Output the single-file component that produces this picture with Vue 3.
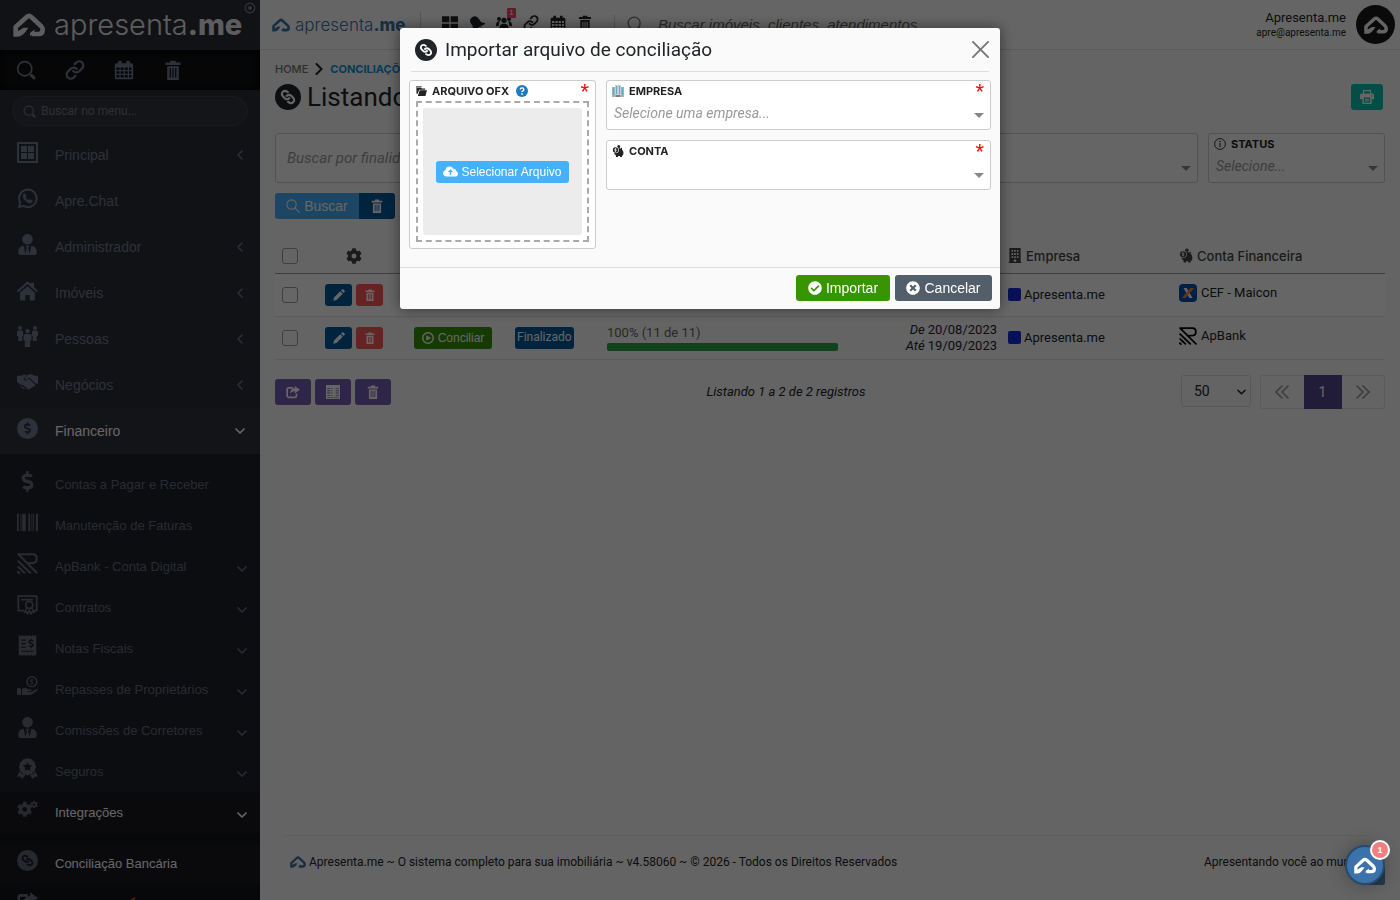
<script setup>
import { h, ref } from 'vue'

const LINK = 'M326.612 185.391c59.747 59.809 58.927 155.698.36 214.59-.11.12-.24.25-.36.37l-67.2 67.2c-59.27 59.27-155.699 59.262-214.96 0-59.27-59.26-59.27-155.7 0-214.96l37.106-37.106c9.84-9.84 26.786-3.3 27.294 10.606.648 17.722 3.826 35.527 9.69 52.721 1.986 5.822.567 12.262-3.783 16.612l-13.087 13.087c-28.026 28.026-28.905 73.66-1.155 101.96 28.024 28.579 74.086 28.749 102.325.51l67.2-67.19c28.191-28.191 28.073-73.757 0-101.83-3.701-3.694-7.429-6.564-10.341-8.569a16.037 16.037 0 0 1-6.947-12.606c-.396-10.567 3.348-21.456 11.698-29.806l21.054-21.055c5.521-5.521 14.182-6.199 20.584-1.731a152.482 152.482 0 0 1 20.522 17.197zM467.547 44.449c-59.261-59.262-155.69-59.27-214.96 0l-67.2 67.2c-.12.12-.25.25-.36.37-58.566 58.892-59.387 154.781.36 214.59a152.454 152.454 0 0 0 20.521 17.196c6.402 4.468 15.064 3.789 20.584-1.731l21.054-21.055c8.35-8.35 12.094-19.239 11.698-29.806a16.037 16.037 0 0 0-6.947-12.606c-2.912-2.005-6.64-4.875-10.341-8.569-28.073-28.073-28.191-73.639 0-101.83l67.2-67.19c28.239-28.239 74.3-28.069 102.325.51 27.75 28.3 26.872 73.934-1.155 101.96l-13.087 13.087c-4.35 4.35-5.769 10.79-3.783 16.612 5.864 17.194 9.042 34.999 9.69 52.721.509 13.906 17.454 20.446 27.294 10.606l37.106-37.106c59.271-59.259 59.271-155.699.001-214.959z'
const DOLLAR = 'M209.2 233.4l-108-31.6C88.7 198.2 80 186.5 80 173.5c0-16.3 13.2-29.5 29.5-29.5h66.3c12.2 0 24.2 3.7 34.2 10.5 6.1 4.1 14.3 3.1 19.5-2l34.8-34c7.1-6.9 6.1-18.4-1.8-24.5C238 74.8 207.4 64.1 176 64V16c0-8.8-7.2-16-16-16h-32c-8.8 0-16 7.2-16 16v48h-2.5C45.8 64-5.4 118.7.5 183.6c4.2 46.1 39.4 83.6 83.8 96.6l102.5 30c12.5 3.7 21.2 15.3 21.2 28.3 0 16.3-13.2 29.5-29.5 29.5h-66.3C100 368 88 364.3 78 357.5c-6.1-4.1-14.3-3.1-19.5 2l-34.8 34c-7.1 6.9-6.1 18.4 1.8 24.5 24.5 19.2 55.1 29.9 86.5 30v48c0 8.8 7.2 16 16 16h32c8.8 0 16-7.2 16-16v-48.2c46.6-.9 90.3-28.6 105.7-72.7 21.5-61.6-14.6-124.8-72.5-141.7z'
const COG = 'M487.4 315.7l-42.6-24.6c4.3-23.2 4.3-47 0-70.2l42.6-24.6c4.9-2.8 7.1-8.6 5.5-14-11.1-35.6-30-67.8-54.7-94.6-3.8-4.1-10-5.1-14.8-2.3L380.8 110c-17.9-15.4-38.5-27.3-60.8-35.1V25.8c0-5.6-3.9-10.5-9.4-11.7-36.7-8.2-74.3-7.8-109.2 0-5.5 1.2-9.4 6.1-9.4 11.7V75c-22.2 7.9-42.8 19.8-60.8 35.1L88.7 85.5c-4.9-2.8-11-1.9-14.8 2.3-24.7 26.7-43.6 58.9-54.7 94.6-1.7 5.4.6 11.2 5.5 14L67.3 221c-4.3 23.2-4.3 47 0 70.2l-42.6 24.6c-4.9 2.8-7.1 8.6-5.5 14 11.1 35.6 30 67.8 54.7 94.6 3.8 4.1 10 5.1 14.8 2.3l42.6-24.6c17.9 15.4 38.5 27.3 60.8 35.1v49.2c0 5.6 3.9 10.5 9.4 11.7 36.7 8.2 74.3 7.8 109.2 0 5.5-1.2 9.4-6.1 9.4-11.7v-49.2c22.2-7.9 42.8-19.8 60.8-35.1l42.6 24.6c4.9 2.8 11 1.9 14.8-2.3 24.7-26.7 43.6-58.9 54.7-94.6 1.5-5.5-.7-11.3-5.6-14.1zM256 336c-44.1 0-80-35.9-80-80s35.9-80 80-80 80 35.9 80 80-35.9 80-80 80z'

const p = (d, extra = '') => `<path d="${d}" ${extra}/>`
const s = (d, w = 2) => `<path d="${d}" fill="none" stroke="currentColor" stroke-width="${w}" stroke-linecap="round" stroke-linejoin="round"/>`

const icons = {
  logo: ['0 0 96 72', '<path d="M8 62V42L41 12q7-6 14 0L83 38q6 6 6 12 0 13-13 13H56" fill="none" stroke="currentColor" stroke-width="14" stroke-linejoin="round"/>' + p('M1 71V62L32 44H46Q38 58 29 65 21 71 14 71zM51 70V60L66 49 62 60z')],
  search: ['0 0 24 24', '<circle cx="10.5" cy="10.5" r="8.5" fill="none" stroke="currentColor" stroke-width="2"/>' + s('M18.5 18.5 21.5 21.5', 3.6)],
  searchThin: ['0 0 24 24', '<circle cx="9.5" cy="9.5" r="8" fill="none" stroke="currentColor" stroke-width="1.8"/>' + s('M15.5 15.5 22.5 22.5', 2)],
  link: ['0 0 24 24', s('M9.800 13.200a5 5 0 0 0 7.300.200l3.400-3.400a4.900 4.900 0 0 0-7-7l-2 2M14.200 10.800a5 5 0 0 0-7.300-.200l-3.400 3.400a4.900 4.900 0 0 0 7 7l2-2', 2.7)],
  linkCircle: ['0 0 24 24', '<circle cx="12" cy="12" r="12"/>' + `<g transform="translate(12 12) rotate(90) scale(.026) translate(-256 -256)" class="knock">${p(LINK)}</g>`],
  calendar: ['0 0 24 24', p('M5 1h4v3h6V1h4v3h2q2 0 2 2v16q0 1-1 1H2q-1 0-1-1V6q0-2 2-2h2zM3 9v3h3.500V9zm5 0v3h3.500V9zm5 0v3h3.500V9zm5 0v3h3V9zM3 13.500v3h3.500v-3zm5 0v3h3.500v-3zm5 0v3h3.500v-3zm5 0v3h3v-3zM3 18v3h3.500v-3zm5 0v3h3.500v-3zm5 0v3h3.500v-3zm5 0v3h3v-3z', 'fill-rule="evenodd"')],
  trash: ['0 0 24 24', p('M8.500 1h7v2H21v3H3V3h5.500zM5 7.500h14V24H5zM8 10v11h1.500V10zm3.300 0v11h1.400V10zM14.500 10v11H16V10z', 'fill-rule="evenodd"')],
  target: ['0 0 12 12', '<circle cx="6" cy="6" r="4.800" fill="none" stroke="currentColor" stroke-width="1.200"/><circle cx="6" cy="6" r="2"/>'],
  windows: ['0 0 21 21', p('M0 0h21v21H0zM2 2v17h17V2zM4 4h6v6H4zM11 4h6v6h-6zM4 11h6v6H4zM11 11h6v6h-6z', 'fill-rule="evenodd"')],
  whatsapp: ['0 0 24 24', s('M2.200 21.800 3.600 16.600A10 10 0 1 1 7.400 20.500Z', 2.200) + p('M8.600 6.300c-.6 0-2 .9-2 2.800 0 3 4.800 8.200 8.600 8.200 1.600 0 2.800-1.200 2.800-2.600 0-.6-2.600-1.900-3.200-1.900-.5 0-1 1.300-1.600 1.300-.8 0-3.500-2.500-3.500-3.400 0-.6 1-.9 1-1.600 0-.6-1-2.800-2.100-2.800z')],
  userTie: ['0 0 448 512', p('M224 256c70.700 0 128-57.300 128-128S294.700 0 224 0 96 57.300 96 128s57.300 128 128 128zm95.800 32.600L272 480l-32-136 32-56h-96l32 56-32 136-47.800-191.400C56.900 292 0 350.300 0 422.400V464c0 26.500 21.500 48 48 48h352c26.500 0 48-21.500 48-48v-41.600c0-72.100-56.900-130.400-128.200-133.800z')],
  home: ['0 0 24 24', p('M12 1.500 15.500 4.600V3h4v5.200L24 12.200l-1.500 1.800L12 4.600 1.500 14 0 12.200zM12 7l8.500 7.500V22q0 1.500-1.500 1.500h-4.500V17h-5v6.500H5Q3.500 23.500 3.500 22v-7.500z')],
  people: ['0 0 24 24', '<circle cx="3.500" cy="2.300" r="2.300"/><circle cx="20.500" cy="2.300" r="2.300"/><circle cx="12" cy="5.800" r="2.500"/>' + p('M1.500 5.200h4Q7 5.200 7 7v4.500H6V17H1.500v-5L0 11V7q0-1.800 1.500-1.800zM18.500 5.200h4Q24 5.200 24 7v4l-1.500 1V17H18v-5.500h-1V7q0-1.800 1.500-1.800zM9.500 9h5Q16.500 9 16.500 11v5.500H15V24H9v-7.500H7.500V11q0-2 2-2z')],
  handshake: ['0 0 24 24', p('M0 4.500h4.500L7 3.500q2-.8 4 .3L8 6.600q-1 1.600.2 2.800 1.600 1.200 3.400-.3l1.600-1.300 7 6.300q.8 1-.1 1.800-.8.700-1.700.2.200 1.700-1.800 1.700-.3 1.500-2 1.200-1 1.200-2.300.4L6.500 14.200H4L0 11zM24 4.500h-3.500l-4-1.700q-2.500-.6-4.200 1L9.400 6.700q-.7 1 .2 1.600.9.400 1.700-.3l2.300-1.900L21.500 13H24zM3 14.500l3.500 4.200q1.500 1 2.500.2l2 1.300', 'stroke="currentColor" stroke-width=".4"')],
  dollar: ['0 0 288 512', p(DOLLAR)],
  dollarCircle: ['0 0 24 24', '<circle cx="12" cy="12" r="12"/>' + `<g class="knock" transform="translate(8.100 4.900) scale(.0275)">${p(DOLLAR)}</g>`],
  barcode: ['0 0 24 20', p('M0 0h2v20H0zM4 0h1v20H4zM6 0h1v20H6zM7 0h3v20H7zM13 0h2v20h-2zM16.500 0h1v20h-1zM18.500 0h1v20h-1zM21.500 0H24v20h-2.500z')],
  apbank: ['0 0 24 24', s('M1.500 1.500H18q4.500 0 4.500 4.800T18 11.500h-4M1.500 1.500 22.500 22.500M1.500 9.500 15 22.500M1.500 16 8.500 22.500M1 21.500l1.500 1.300', 2.400)],
  certificate: ['0 0 24 24', s('M7 19H1.500V2.500h21V19H20M5.500 6.500h12', 2) + '<circle cx="14" cy="12.500" r="4" fill="none" stroke="currentColor" stroke-width="2"/>' + s('M11 16.500 8.500 21l2.300-.3L12 23l2-4.500 2 4.500 1.200-2.300 2.300.3L17 16.500', 1.700)],
  receipt: ['0 0 22 24', p('M1 0l2 1.500L5 0l2 1.500L9 0l2 1.500L13 0l2 1.500L17 0l2 1.500L21 0v24l-2-1.500L17 24l-2-1.500L13 24l-2-1.500L9 24l-2-1.500L5 24l-2-1.500L1 24zM4 5v1.500h5V5zm0 4v1.500h5V9zm0 4v1.500h5V13zm0 5v1h14v-1z', 'fill-rule="evenodd"') + `<g class="knock" transform="translate(12 4) scale(.022)">${p(DOLLAR)}</g>`],
  handMoney: ['0 0 24 24', '<circle cx="17" cy="6.500" r="5.600" fill="none" stroke="currentColor" stroke-width="1.600"/>' + `<g transform="translate(15.200 3.200) scale(.0128)">${p(DOLLAR)}</g>` + p('M0 14h4.500v7.500H0zM5.500 15q4-2.500 7 0h3.500q1.500 1-.2 2.200H12v.7h5l5-3q1.800-.3 2 .8L18 20.500q-2 1.200-5 1.200H5.500z')],
  award: ['0 0 24 24', p('M12 0l2.400 1.200L17 1.300l1.400 2.300 2.200 1.400.1 2.600L22 10l-1.200 2.400-.1 2.500-2.300 1.500-1.400 2.200-2.600.1L12 20l-2.400-1.200-2.600-.1-1.400-2.300-2.300-1.400-.1-2.600L2 10l1.200-2.400.1-2.600 2.300-1.400L7 1.300l2.600-.1zM12 4.500l-1.700 3.400-3.700.5 2.700 2.600-.6 3.700L12 13l3.300 1.700-.6-3.700 2.700-2.600-3.700-.5z', 'fill-rule="evenodd"') + p('M3 15.500 0 21.500l3.500-.3L6 24l3.500-5-3.500-.4zM21 15.500l3 6-3.500-.3L18 24l-3.500-5 3.500-.4z')],
  cogs: ['0 0 24 24', `<g transform="translate(0 3) scale(.0345)">${p(COG)}</g><g transform="translate(15.200 2) scale(.0172)">${p(COG)}</g>`],
  cog: ['0 0 512 512', p(COG)],
  share: ['0 0 24 24', s('M11 5H4.500Q2 5 2 7.500v11Q2 21 4.500 21h11q2.500 0 2.500-2.500V16', 3) + p('M15 1.500 24 8l-9 6.500v-4Q9 10.500 7 15.500 7 6 15 5.500z')],
  grid: ['0 0 24 24', p('M0 2h11v9H0zM13 2h11v9H13zM0 13h11v9H0zM13 13h11v9H13z')],
  bell: ['0 0 24 24', `<g transform="rotate(-28 12 12)">${p('M9 1q8-1 8.500 7l.5 5q.5 2 4 4v2H2v-2Q4 15 4 12L3.500 7Q4 2 9 1zM9 20.500h6Q14.500 23 12 23t-3-2.500z')}</g>`],
  team: ['0 0 24 24', '<circle cx="12" cy="8" r="4"/><circle cx="4.500" cy="6" r="3"/><circle cx="19.500" cy="6" r="3"/>' + p('M5 23q-1-10 7-10t7 10zM0 17q-.5-8 6-7.500Q4 12 4.500 16zM24 17q.5-8-6-7.500Q20 12 19.500 16z')],
  printer: ['0 0 24 24', p('M5 0h14v6h2q3 0 3 3v7h-4v8H4v-8H0V9q0-3 3-3h2zM7 2v4h10V2zM6.500 13v9h11v-9zM8.500 15h7v1.500h-7zm0 3h7v1.500h-7zM19 9h2v2h-2z', 'fill-rule="evenodd"')],
  pencil: ['0 0 24 24', p('M18 1q1.500-1.500 3 0l2 2q1.500 1.500 0 3l-2 2-5-5zM14.500 4.500l5 5L7 22l-6.500 1.500L2 17z')],
  play: ['0 0 24 24', '<circle cx="12" cy="12" r="10.500" fill="none" stroke="currentColor" stroke-width="2.800"/>' + p('M8.500 6.500 18 12l-9.500 5.500z')],
  table: ['0 0 24 24', p('M0 0h24v24H0zM2 5v1.500h5V5zm0 4v1.500h5V9zm0 4v1.500h5V13zm0 4v1.500h5V17zM9 5v1.500h2V5zm0 4v1.500h2V9zm0 4v1.500h2V13zm0 4v1.500h2V17zM16.500 5v1.500H22V5zm0 4v1.500H22V9zm0 4v1.500H22V13zm0 4v1.500H22V17zM2 21v1h20v-1z', 'fill-rule="evenodd"')],
  building: ['0 0 20 24', p('M1 0h18v22h1v2H0v-2h1zM4.500 3v3h2.500V3zm4.200 0v3h2.600V3zM13 3v3h2.500V3zM4.500 8v3h2.500V8zm4.200 0v3h2.600V8zM13 8v3h2.500V8zM4.500 13v3h2.500v-3zm4.200 0v3h2.600v-3zM13 13v3h2.500v-3zM8 18.500V22h4v-3.500z', 'fill-rule="evenodd"')],
  buildingColor: ['0 0 12 12', '<path d="M0 2h3v10H0zM9 2h3v10H9z" fill="#9fb3ba"/><path d="M3 0h6v12H3z" fill="#c3d2d7"/><path d="M4.500 1v8M7.500 1v8M1.500 3v7M10.500 3v7" stroke="#64a9bd" stroke-width="1"/><path d="M3.500 10h5v2h-5z" fill="#8a7a72"/>'],
  piggy: ['0 0 24 24', '<circle cx="13.500" cy="3" r="3"/>' + p('M8 7 14 6l3 1 3-2v4q3 3 3 7 0 4-3 6v2h-4v-2h-4v2H8v-3q-3-2-4-5z') + '<circle cx="7" cy="10" r="6.500" class="knock-fill"/><circle cx="7" cy="10" r="5.300"/><path class="knock-line" d="M9 8.300q-3.800-1.600-3.800.4 0 1 1.800 1.300t1.800 1.300q0 2-3.800.4M7 6.500v7" fill="none" stroke-width="1.300"/>'],
  folder: ['0 0 24 24', p('M2 3h9l2 2.500h7V8H7L3.500 17H2zM8 9.500h16L20.500 22H4z') + '<path d="M.700 17V1h12" fill="none" stroke="currentColor" stroke-width="1.400"/>'],
  help: ['0 0 24 24', '<circle cx="12" cy="12" r="12" fill="#1a7bbf"/><path d="M8.300 9Q8.500 5.800 12 5.800T15.700 9q0 1.800-1.900 2.800T12 14.200" fill="none" stroke="#fff" stroke-width="2.800"/><circle cx="12" cy="17.800" r="1.700" fill="#fff"/>'],
  cloud: ['0 0 24 16', p('M6 16Q0 15.500 0 10.800 0 7 4 6 4.500 0 10.500 0q4.500 0 6 3.600Q21 3 21 7.200q3 1 3 4.300Q24 16 19.500 16zM12 4.500 8 8.700h2.800v4.300h2.400V8.700H16z', 'fill-rule="evenodd"')],
  check: ['0 0 512 512', p('M504 256c0 136.967-111.033 248-248 248S8 392.967 8 256 119.033 8 256 8s248 111.033 248 248zM227.314 387.314l184-184c6.248-6.248 6.248-16.379 0-22.627l-22.627-22.627c-6.248-6.249-16.379-6.249-22.628 0L216 308.118l-70.059-70.059c-6.248-6.248-16.379-6.248-22.628 0l-22.627 22.627c-6.248 6.248-6.248 16.379 0 22.627l104 104c6.249 6.249 16.379 6.249 22.628.001z')],
  times: ['0 0 512 512', p('M256 8C119 8 8 119 8 256s111 248 248 248 248-111 248-248S393 8 256 8zm121.600 313.100c4.700 4.700 4.700 12.300 0 17L338 377.600c-4.700 4.700-12.300 4.700-17 0L256 312l-65.100 65.600c-4.700 4.700-12.300 4.700-17 0L134.400 338c-4.700-4.700-4.700-12.300 0-17l65.600-65-65.600-65.100c-4.700-4.700-4.700-12.300 0-17l39.600-39.600c4.700-4.700 12.300-4.700 17 0l65 65.700 65.100-65.600c4.700-4.700 12.300-4.700 17 0l39.600 39.600c4.700 4.700 4.700 12.300 0 17L312 256l65.600 65.100z')],
  close: ['0 0 18 18', s('M1 1 17 17M17 1 1 17', 2)],
  info: ['0 0 24 24', '<circle cx="12" cy="12" r="10.800" fill="none" stroke="currentColor" stroke-width="1.800"/><circle cx="12" cy="7" r="1.400"/>' + s('M12 10.500V17.500', 2)],
  left: ['0 0 6 10', s('M5 1 1 5 5 9', 1.400)],
  down: ['0 0 10 6', s('M1 1 5 5 9 1', 1.700)],
  right: ['0 0 8 12', s('M1.500 1 6.500 6 1.500 11', 2)],
  caret: ['0 0 10 5', p('M0 0h10L5 5z')],
  first: ['0 0 14 14', s('M7 1 1 7 7 13M13 1 7 7 13 13', 1.700)],
  last: ['0 0 14 14', s('M1 1 7 7 1 13M7 1 13 7 7 13', 1.700)],
  cef: ['0 0 18 18', '<rect width="18" height="18" rx="4" fill="#0050b8"/><path d="M4.500 4h3.200l1.800 3.500L8 10z" fill="#fff"/><path d="M13.500 14h-3.200L8.500 10.500 10 8z" fill="#fff"/><path d="M11.500 4H15L6.500 14H3z" fill="#ff8a1e"/>'],
  leaf: ['0 0 10 10', p('M0 10Q2 1 10 0 7 4 6 10z')]
}

const Icon = (props) => h('svg', {
  viewBox: icons[props.name][0],
  fill: 'currentColor',
  'aria-hidden': 'true',
  innerHTML: icons[props.name][1]
})
Icon.props = ['name']

const shortcuts = [
  { icon: 'search', label: 'Buscar' },
  { icon: 'link', label: 'Links' },
  { icon: 'calendar', label: 'Agenda' },
  { icon: 'trash', label: 'Lixeira' }
]
const menu = [
  { icon: 'windows', label: 'Principal', more: true },
  { icon: 'whatsapp', label: 'Apre.Chat' },
  { icon: 'userTie', label: 'Administrador', more: true },
  { icon: 'home', label: 'Imóveis', more: true },
  { icon: 'people', label: 'Pessoas', more: true },
  { icon: 'handshake', label: 'Negócios', more: true }
]
const finance = [
  { icon: 'dollar', label: 'Contas a Pagar e Receber' },
  { icon: 'barcode', label: 'Manutenção de Faturas' },
  { icon: 'apbank', label: 'ApBank - Conta Digital', more: true },
  { icon: 'certificate', label: 'Contratos', more: true },
  { icon: 'receipt', label: 'Notas Fiscais', more: true },
  { icon: 'handMoney', label: 'Repasses de Proprietários', more: true },
  { icon: 'userTie', label: 'Comissões de Corretores', more: true },
  { icon: 'award', label: 'Seguros', more: true },
  { icon: 'cogs', label: 'Integrações', more: true, active: true }
]
const rows = [
  { company: 'Apresenta.me', bank: 'cef', account: 'CEF - Maicon' },
  { company: 'Apresenta.me', bank: 'apbank', account: 'ApBank', status: 'Finalizado', done: 11, total: 11, from: '20/08/2023', to: '19/09/2023' }
]
const perPage = ref('50')
</script>

<template>
  <div class="page">
    <aside class="sidebar">
      <div class="brand">
        <Icon name="logo" class="brand-mark" />
        <span class="brand-name">apresenta<b>.me</b></span>
        <button class="pin" aria-label="Fixar menu"><Icon name="target" /></button>
      </div>
      <div class="shortcuts">
        <button v-for="i in shortcuts" :key="i.icon" :aria-label="i.label"><Icon :name="i.icon" /></button>
      </div>
      <label class="menu-search">
        <Icon name="search" />
        <input type="text" placeholder="Buscar no menu..." aria-label="Buscar no menu" />
      </label>
      <nav>
        <a v-for="i in menu" :key="i.label" href="#" class="item">
          <Icon :name="i.icon" class="ico" /><span>{{ i.label }}</span>
          <Icon v-if="i.more" name="left" class="chev-left" />
        </a>
        <a href="#" class="item open">
          <Icon name="dollarCircle" class="ico" /><span>Financeiro</span>
          <Icon name="down" class="chev-down" />
        </a>
        <div class="sub">
          <a v-for="i in finance" :key="i.label" href="#" class="item small" :class="{ active: i.active }">
            <Icon :name="i.icon" class="ico" /><span>{{ i.label }}</span>
            <Icon v-if="i.more" name="down" class="chev-down" />
          </a>
          <div class="sub deep">
            <a href="#" class="item small active">
              <Icon name="linkCircle" class="ico" /><span>Conciliação Bancária</span>
            </a>
            <a href="#" class="item small" aria-label="Exportar">
              <Icon name="share" class="ico" /><Icon name="leaf" class="leaf" />
            </a>
          </div>
        </div>
      </nav>
    </aside>

    <div class="main">
      <header class="topbar">
        <a href="#" class="top-logo"><Icon name="logo" /><span>apresenta<b>.me</b></span></a>
        <div class="top-icons">
          <button aria-label="Painel"><Icon name="grid" /></button>
          <button aria-label="Notificações"><Icon name="bell" /></button>
          <button aria-label="Equipe"><Icon name="team" /><em>1</em></button>
          <button aria-label="Links"><Icon name="link" /></button>
          <button aria-label="Agenda"><Icon name="calendar" /></button>
          <button aria-label="Lixeira"><Icon name="trash" /></button>
        </div>
        <label class="top-search">
          <Icon name="searchThin" />
          <input type="text" placeholder="Buscar imóveis, clientes, atendimentos..." aria-label="Busca geral" />
        </label>
        <div class="user">
          <div><strong>Apresenta.me</strong><small>apre@apresenta.me</small></div>
          <span class="avatar"><Icon name="logo" /></span>
        </div>
      </header>

      <main class="content">
        <div class="crumbs"><a href="#">HOME</a><Icon name="right" /><b>CONCILIAÇÕES</b></div>
        <div class="title-row">
          <h1><Icon name="linkCircle" />Listando</h1>
          <button class="print" aria-label="Imprimir"><Icon name="printer" /></button>
        </div>

        <div class="filters">
          <div class="field plain">
            <input type="text" placeholder="Buscar por finalidade..." aria-label="Buscar por finalidade" />
          </div>
          <div class="field">
            <select aria-label="Empresa"><option></option></select>
            <Icon name="caret" class="caret" />
          </div>
          <div class="field status">
            <label for="status"><Icon name="info" />STATUS</label>
            <select id="status"><option>Selecione...</option></select>
            <Icon name="caret" class="caret" />
          </div>
        </div>
        <div class="search-buttons">
          <button class="btn sky"><Icon name="searchThin" />Buscar</button>
          <button class="btn navy" aria-label="Limpar"><Icon name="trash" /></button>
        </div>

        <table>
          <colgroup>
            <col class="c-check" /><col class="c-tools" /><col class="c-act" /><col class="c-stat" />
            <col /><col class="c-date" /><col class="c-comp" /><col class="c-acc" />
          </colgroup>
          <thead>
            <tr>
              <th><input type="checkbox" aria-label="Selecionar todos" /></th>
              <th><Icon name="cog" class="gear" /></th>
              <th></th><th></th><th></th><th></th>
              <th><span class="th"><Icon name="building" />Empresa</span></th>
              <th><span class="th"><Icon name="piggy" />Conta Financeira</span></th>
            </tr>
          </thead>
          <tbody>
            <tr v-for="(r, n) in rows" :key="n">
              <td><input type="checkbox" :aria-label="'Selecionar ' + r.account" /></td>
              <td>
                <div class="tools">
                  <button class="btn mini navy" aria-label="Editar"><Icon name="pencil" /></button>
                  <button class="btn mini red" aria-label="Excluir"><Icon name="trash" /></button>
                </div>
              </td>
              <td class="action"><button v-if="r.status" class="btn conc"><Icon name="play" />Conciliar</button></td>
              <td><span v-if="r.status" class="tag">{{ r.status }}</span></td>
              <td>
                <div v-if="r.total" class="progress">
                  <span>{{ r.done / r.total * 100 }}% ({{ r.done }} de {{ r.total }})</span>
                  <div><i :style="{ width: r.done / r.total * 100 + '%' }"></i></div>
                </div>
              </td>
              <td class="dates"><template v-if="r.from"><i>De</i> {{ r.from }}<br /><i>Até</i> {{ r.to }}</template></td>
              <td><span class="cell"><span class="sq"></span>{{ r.company }}</span></td>
              <td><span class="cell acc"><Icon :name="r.bank" />{{ r.account }}</span></td>
            </tr>
          </tbody>
        </table>

        <div class="list-foot">
          <div class="bulk">
            <button class="btn purple" aria-label="Exportar"><Icon name="share" /></button>
            <button class="btn purple" aria-label="Colunas"><Icon name="table" /></button>
            <button class="btn purple" aria-label="Excluir"><Icon name="trash" /></button>
          </div>
          <p>Listando 1 a 2 de 2 registros</p>
          <div class="pager">
            <div class="per">
              <select v-model="perPage" aria-label="Registros por página"><option>50</option></select>
              <Icon name="down" />
            </div>
            <div class="pages">
              <button aria-label="Primeira"><Icon name="first" /></button>
              <button class="current">1</button>
              <button aria-label="Última"><Icon name="last" /></button>
            </div>
          </div>
        </div>
      </main>

      <footer class="foot">
        <span><Icon name="logo" />Apresenta.me ~ O sistema completo para sua imobiliária ~ v4.58060 ~ © 2026 - Todos os Direitos Reservados</span>
        <span>Apresentando você ao mundo</span>
      </footer>
      <button class="to-top" aria-label="Voltar ao topo"></button>
    </div>

    <div class="overlay">
      <section class="modal" role="dialog" aria-labelledby="modal-title">
        <header>
          <Icon name="linkCircle" class="m-ico" />
          <h2 id="modal-title">Importar arquivo de conciliação</h2>
          <button aria-label="Fechar"><Icon name="close" /></button>
        </header>
        <div class="m-body">
          <div class="upload">
            <div class="lbl"><Icon name="folder" />ARQUIVO OFX<Icon name="help" class="help" /></div>
            <span class="req">*</span>
            <div class="drop"><div><button class="pick"><Icon name="cloud" />Selecionar Arquivo</button></div></div>
          </div>
          <div class="m-fields">
            <div class="field">
              <label for="empresa"><Icon name="buildingColor" />EMPRESA</label>
              <span class="req">*</span>
              <select id="empresa"><option>Selecione uma empresa...</option></select>
              <Icon name="caret" class="caret" />
            </div>
            <div class="field">
              <label for="conta"><Icon name="piggy" />CONTA</label>
              <span class="req">*</span>
              <select id="conta"><option></option></select>
              <Icon name="caret" class="caret" />
            </div>
          </div>
        </div>
        <footer>
          <button class="btn green"><Icon name="check" />Importar</button>
          <button class="btn slate"><Icon name="times" />Cancelar</button>
        </footer>
      </section>
    </div>

    <button class="chat" aria-label="Atendimento"><Icon name="logo" /><em>1</em></button>
  </div>
</template>

<style>
html, body { margin: 0; background: #fafafa; }
.knock path, .knock-fill { fill: var(--knock, #fafafa); }
.knock-line { stroke: var(--knock, #fafafa); }
</style>

<style scoped>
.page {
  display: flex;
  height: 100vh;
  overflow: hidden;
  font: 13px/16px Roboto, sans-serif;
  color: #212529;
  background: #fafafa;
}
* { box-sizing: border-box; }
button, input, select { font: inherit; color: inherit; border: 0; background: none; padding: 0; margin: 0; border-radius: 0; outline: 0; }
select { appearance: none; }
a { color: inherit; text-decoration: none; }
svg { display: block; flex: none; }
em { font-style: normal; }

/* sidebar */
.sidebar { width: 260px; flex: none; height: 100%; overflow: hidden; background: #2b2e35; color: #727a91; font-family: "Liberation Sans", Arial, sans-serif; }
.brand { position: relative; display: flex; align-items: center; gap: 9px; height: 50px; padding: 0 13px; color: #e8e8e8; }
.brand-mark { width: 32px; height: 24px; }
.brand-name { font: 300 29px/32px Inter, sans-serif; }
.brand-name b { font-weight: 800; }
.pin { position: absolute; top: 2px; right: 4px; color: #7a8197; }
.pin svg { width: 12px; height: 12px; }
.shortcuts { display: flex; gap: 29px; align-items: center; height: 40px; padding: 0 16px; background: #0f1013; box-shadow: inset 0 0 10px #000; }
.shortcuts svg { width: 20px; height: 20px; }
.menu-search { display: flex; align-items: center; gap: 5px; height: 30px; margin: 6px 12px; padding: 0 10px; border: 1px solid #3f434b; border-radius: 15px; background: #33363d; }
.menu-search svg { width: 13px; height: 13px; }
.menu-search input { width: 180px; font-size: 12px; }
.menu-search input::placeholder { color: #727780; opacity: 1; font-family: Roboto, sans-serif; }
.item { display: flex; align-items: center; height: 46px; padding: 0 15px 0 17px; font-size: 14px; }
.item span { flex: 1; }
.ico { width: 21px; height: 21px; margin: 0 17px 5px 0; }
.chev-left { width: 6px; height: 10px; margin-right: 2px; }
.chev-down { width: 10px; height: 6px; }
.open { background: #2f323b; color: #fff; --knock: #2f323b; }
.open .ico, .active .ico { color: #727a91; }
.sub { padding-top: 10px; background: #1e2128; color: #666c7c; --knock: #1e2128; }
.small { height: 41px; padding-right: 13px; font-size: 13px; }
.small .ico { margin-bottom: 7px; }
.small .chev-down { margin-top: 4px; }
.active { color: #fff; background: #191b21; }
.small.active .ico { color: #5f6575; }
.deep { background: #131419; --knock: #191b21; }
.leaf { width: 8px; height: 8px; margin: 0 0 8px 73px; color: #e03020; }

/* top bar */
.main { position: relative; flex: 1; min-width: 0; display: flex; flex-direction: column; }
.topbar { display: flex; align-items: center; height: 50px; padding: 0 5px 0 12px; border-bottom: 1px solid #e2e2e2; background: #fdfdfd; }
.top-logo { display: flex; align-items: center; gap: 5px; color: #3a72a8; width: 149px; height: 26px; border-right: 1px solid #d5d5d5; }
.top-logo svg { width: 18px; height: 14px; }
.top-logo span { font: 300 17px/20px Inter, sans-serif; }
.top-logo b { font-weight: 800; }
.top-icons { display: flex; gap: 9px; padding: 0 20px 4px; border-right: 1px solid #d5d5d5; }
.top-icons button { position: relative; }
.top-icons svg { width: 18px; height: 16px; }
.top-icons em { position: absolute; top: -7px; right: -3px; width: 9px; height: 10px; font: 8px/10px "Liberation Sans", sans-serif; color: #fff; background: #f5446a; border-radius: 1px; }
.top-search { display: flex; flex: 1; align-items: center; gap: 13px; padding: 0 12px; }
.top-search svg { width: 18px; height: 18px; color: #777; }
.top-search input { flex: 1; font: italic 15px/18px "Liberation Sans", sans-serif; }
.top-search input::placeholder { color: #666; opacity: 1; }
.user { display: flex; align-items: center; gap: 10px; text-align: right; }
.user strong { display: block; font-weight: 400; font-size: 13px; }
.user small { display: block; font-size: 10px; line-height: 14px; }
.avatar { display: grid; place-items: center; width: 39px; height: 39px; border-radius: 50%; background: #1b1b1b; color: #fafafa; }
.avatar svg { width: 24px; height: 20px; }

/* content */
.content { flex: 1; padding: 11px 15px; }
.crumbs { display: flex; align-items: center; gap: 7px; font: 500 11px/16px Inter, sans-serif; color: #757575; }
.crumbs svg { width: 8px; height: 12px; color: #222; }
.crumbs b { color: #0a95da; }
.title-row { display: flex; align-items: center; justify-content: space-between; height: 40px; }
h1 { display: flex; align-items: center; gap: 6px; margin: 0; font-weight: 400; font-size: 26px; line-height: 30px; }
h1 svg { width: 26px; height: 26px; }
.print { display: grid; place-items: center; width: 32px; height: 26px; margin-right: 2px; border-radius: 3px; background: #0cc4b1; color: #fff; }
.print svg { width: 14px; height: 14px; }
.filters { display: flex; gap: 10px; margin-top: 16px; }
.field { position: relative; flex: 1; height: 50px; border: 1px solid #ccc; border-radius: 3px; background: #fff; }
.field label, .lbl { display: flex; align-items: center; gap: 5px; height: 20px; padding-left: 5px; font: 700 11px/20px Inter, sans-serif; color: #222; }
.field label svg { width: 12px; height: 12px; }
.field select { width: 100%; height: 24px; padding: 0 7px; font-style: italic; font-size: 14px; color: #999; }
.caret { position: absolute; right: 6px; bottom: 11px; width: 10px; height: 5px; color: #888; pointer-events: none; }
.filters .field { background: #fdfdfd; }
.plain input { width: 100%; height: 48px; padding: 0 11px; font-style: italic; font-size: 15px; }
.plain input::placeholder { color: #999; opacity: 1; }
.status { flex: 0 0 177px; }
.search-buttons { display: flex; margin-top: 10px; }
.btn { display: flex; align-items: center; justify-content: center; gap: 4px; height: 26px; border-radius: 3px; color: #fff; font: 14px/20px "Liberation Sans", sans-serif; }
.btn svg { width: 14px; height: 14px; }
.sky { width: 84px; background: #47b0fb; border-radius: 3px 0 0 3px; }
.search-buttons .navy { width: 36px; border-radius: 0 3px 3px 0; }
.navy { background: #005a9c; }
.red { background: #f95b5b; }

table { width: 100%; margin-top: 20px; border-collapse: collapse; table-layout: fixed; }
.c-check { width: 38px; } .c-tools { width: 81px; } .c-act { width: 111px; } .c-stat { width: 92px; }
.c-date { width: 150px; } .c-comp { width: 171px; } .c-acc { width: 216px; }
th { height: 34px; padding: 0 10px; text-align: left; border-bottom: 1px solid #999; font: 500 13px/16px Inter, sans-serif; color: #444; }
th:first-child, td:first-child { padding: 0 7px; }
td { height: 43px; padding: 0 10px; border-bottom: 1px solid #e4e4e4; }
td.action { padding-left: 20px; }
tbody tr:first-child { background: #fff; }
input[type=checkbox] { appearance: none; display: block; width: 16px; height: 16px; border: 1px solid #999da5; border-radius: 3px; }
.gear { width: 16px; height: 16px; margin: 0 auto; }
.th, .cell { display: flex; align-items: center; gap: 4px; }
.th svg { width: 14px; height: 15px; }
.tools { display: flex; gap: 4px; padding-left: 2px; }
.mini { width: 27px; height: 22px; }
.mini svg { width: 12px; height: 12px; }
.conc { width: 78px; height: 22px; background: #369500; font-size: 12px; }
.conc svg { width: 12px; height: 12px; }
.tag { display: inline-block; padding: 0 2px; height: 22px; line-height: 20px; border-radius: 3px; background: #005a9c; color: #fff; font-size: 12px; }
.progress span { display: block; color: #666; }
.progress div { height: 8px; margin-top: 2px; }
.progress i { display: block; height: 8px; border-radius: 2px; background: #28a745; }
.dates { text-align: right; padding: 0 1px 0 0; }
.cell { gap: 3px; }
.sq { width: 13px; height: 13px; border-radius: 2px; background: #1428dc; }
.acc { gap: 4px; padding-bottom: 3px; }
.acc svg { width: 18px; height: 18px; color: #000; }

.list-foot { display: flex; justify-content: space-between; align-items: center; margin-top: 15px; }
.list-foot p { margin: 0; font-style: italic; }
.bulk { display: flex; gap: 4px; }
.purple { width: 36px; background: #735cb4; }
.pager { display: flex; gap: 9px; }
.per { position: relative; width: 70px; height: 32px; border: 1px solid #ddd; border-radius: 3px; }
.per select { width: 100%; height: 30px; padding-left: 12px; font-size: 14px; }
.per svg { position: absolute; right: 4px; top: 13px; width: 9px; height: 6px; pointer-events: none; }
.pages { display: flex; width: 125px; height: 34px; border: 1px solid #e2e2e2; border-radius: 3px; }
.pages button { display: grid; place-items: center; flex: 1; color: #bbb; }
.pages .current { flex: 0 0 38px; margin: -1px 0; background: #54468c; color: #fff; font-size: 14px; }
.pages svg { width: 14px; height: 14px; color: #999; }

.foot { display: flex; justify-content: space-between; margin: 0 30px 30px 24px; padding: 18px 0 0 6px; border-top: 1px solid #ededed; font-size: 12px; }
.foot span:last-child { flex: 0 0 166px; white-space: nowrap; }
.foot span:first-child { display: flex; align-items: center; gap: 3px; }
.foot svg { width: 16px; height: 14px; color: #3a72a8; }
.to-top { position: absolute; right: 15px; bottom: 15px; width: 20px; height: 20px; border-radius: 2px; background: #5590c4; }

/* modal */
.overlay { position: fixed; inset: 0; padding-top: 28px; background: rgba(0, 0, 0, .6); }
.modal { width: 600px; margin: 0 auto; border-radius: 3px; background: #fafafa; box-shadow: 0 0 14px rgba(0, 0, 0, .5); }
.modal header { display: flex; align-items: center; gap: 8px; height: 44px; margin: 0 11px 8px; padding: 0 0 0 4px; border-bottom: 1px solid #ddd; }
.m-ico { width: 22px; height: 22px; }
h2 { flex: 1; margin: 0; font-weight: 400; font-size: 19px; line-height: 24px; }
.modal header button { color: #777; }
.modal header button svg { width: 17px; height: 17px; }
.m-body { display: flex; gap: 10px; padding: 0 9px 18px; }
.m-body label, .lbl { --knock: #fff; }
.upload { position: relative; width: 187px; padding: 0 6px 6px; border: 1px solid #ccc; border-radius: 3px; background: #fff; }
.lbl { padding: 0; }
.lbl svg { width: 11px; height: 11px; }
.lbl .help { width: 12px; height: 12px; margin-left: 2px; }
.drop { padding: 5px; border: 2px dashed #aaa; }
.drop div { display: grid; place-items: center; height: 127px; border-radius: 3px; background: #ececec; }
.pick { display: flex; align-items: center; gap: 3px; height: 22px; padding: 0 7px; border-radius: 3px; background: #47b0fb; color: #fff; font: 12px/22px "Liberation Sans", sans-serif; }
.pick svg { width: 15px; height: 11px; }
.req { position: absolute; top: 0; right: 6px; color: #f00; font: 400 22px/22px "Liberation Sans", sans-serif; }
.m-fields { flex: 1; display: grid; gap: 10px; align-content: start; }
.modal footer { display: flex; justify-content: flex-end; gap: 5px; padding: 7px 8px 8px; border-top: 1px solid #ddd; }
.green { width: 94px; background: #369500; }
.slate { width: 97px; background: #525f6b; }

.chat { position: fixed; right: 15px; bottom: 15px; display: grid; place-items: center; width: 40px; height: 40px; border: 2px solid #264a6c; border-radius: 50%; background: #3b72a9; color: #fff; box-shadow: 0 0 18px rgba(0, 0, 0, .3); }
.chat svg { width: 22px; height: 17px; }
.chat em { position: absolute; top: -7px; right: -7px; width: 20px; height: 20px; border: 2px solid #fff; border-radius: 50%; background: #f07f7f; font: 700 9px/16px "Liberation Sans", sans-serif; }
</style>
